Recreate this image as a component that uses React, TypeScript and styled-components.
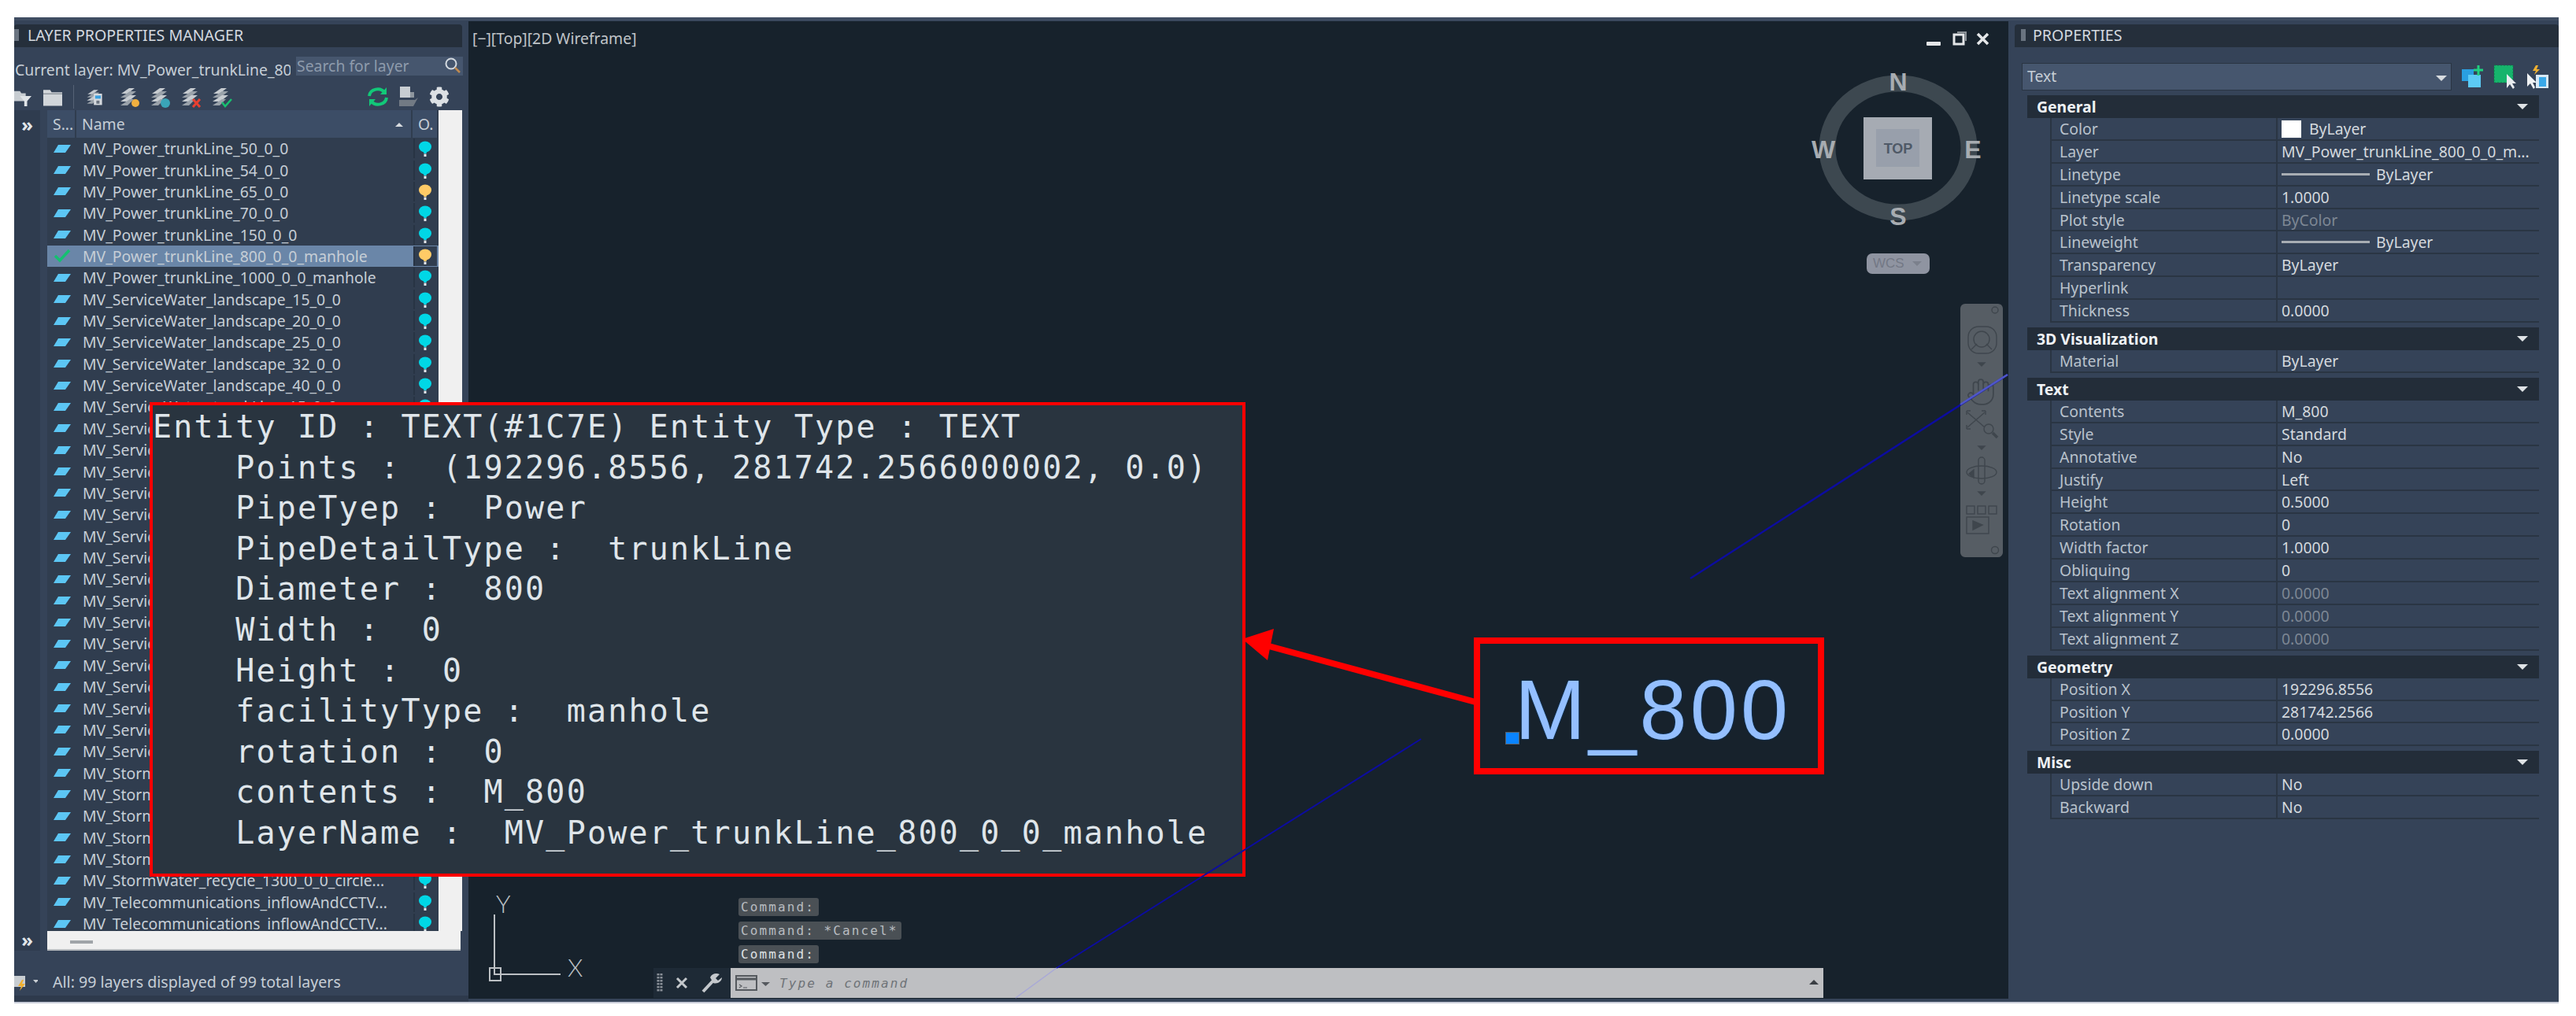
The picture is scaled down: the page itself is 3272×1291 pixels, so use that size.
import React from 'react';
import styled, { createGlobalStyle } from 'styled-components';
import { FaCog } from 'react-icons/fa';
import { Hand } from 'lucide-react';

const GlobalStyle = createGlobalStyle`
  html, body {
    margin: 0;
    background: #fff;
  }
  body {
    font-family: "Noto Sans", "Open Sans", sans-serif;
    overflow: hidden;
  }
`;

type Layer = { name: string; on?: boolean; current?: boolean };

const layers: Layer[] = [
  { name: 'MV_Power_trunkLine_50_0_0' },
  { name: 'MV_Power_trunkLine_54_0_0' },
  { name: 'MV_Power_trunkLine_65_0_0', on: true },
  { name: 'MV_Power_trunkLine_70_0_0' },
  { name: 'MV_Power_trunkLine_150_0_0' },
  { name: 'MV_Power_trunkLine_800_0_0_manhole', on: true, current: true },
  { name: 'MV_Power_trunkLine_1000_0_0_manhole' },
  { name: 'MV_ServiceWater_landscape_15_0_0' },
  { name: 'MV_ServiceWater_landscape_20_0_0' },
  { name: 'MV_ServiceWater_landscape_25_0_0' },
  { name: 'MV_ServiceWater_landscape_32_0_0' },
  { name: 'MV_ServiceWater_landscape_40_0_0' },
  ...[15, 20, 25, 32, 40, 50, 65, 80, 100, 125, 150, 200, 250, 300, 350, 400, 500].map((d) => ({
    name: `MV_ServiceWater_trunkLine_${d}_0_0`,
  })),
  ...[300, 400, 500, 600, 800].map((d) => ({ name: `MV_StormWater_recycle_${d}_0_0` })),
  { name: 'MV_StormWater_recycle_1300_0_0_circle...' },
  { name: 'MV_Telecommunications_inflowAndCCTV...' },
  { name: 'MV_Telecommunications_inflowAndCCTV...' },
];

type Prop = { label: string; value?: string; muted?: boolean; swatch?: boolean; line?: boolean };
type Section = { title: string; rows: Prop[] };

const sections: Section[] = [
  {
    title: 'General',
    rows: [
      { label: 'Color', value: 'ByLayer', swatch: true },
      { label: 'Layer', value: 'MV_Power_trunkLine_800_0_0_m...' },
      { label: 'Linetype', value: 'ByLayer', line: true },
      { label: 'Linetype scale', value: '1.0000' },
      { label: 'Plot style', value: 'ByColor', muted: true },
      { label: 'Lineweight', value: 'ByLayer', line: true },
      { label: 'Transparency', value: 'ByLayer' },
      { label: 'Hyperlink' },
      { label: 'Thickness', value: '0.0000' },
    ],
  },
  { title: '3D Visualization', rows: [{ label: 'Material', value: 'ByLayer' }] },
  {
    title: 'Text',
    rows: [
      { label: 'Contents', value: 'M_800' },
      { label: 'Style', value: 'Standard' },
      { label: 'Annotative', value: 'No' },
      { label: 'Justify', value: 'Left' },
      { label: 'Height', value: '0.5000' },
      { label: 'Rotation', value: '0' },
      { label: 'Width factor', value: '1.0000' },
      { label: 'Obliquing', value: '0' },
      { label: 'Text alignment X', value: '0.0000', muted: true },
      { label: 'Text alignment Y', value: '0.0000', muted: true },
      { label: 'Text alignment Z', value: '0.0000', muted: true },
    ],
  },
  {
    title: 'Geometry',
    rows: [
      { label: 'Position X', value: '192296.8556' },
      { label: 'Position Y', value: '281742.2566' },
      { label: 'Position Z', value: '0.0000' },
    ],
  },
  {
    title: 'Misc',
    rows: [
      { label: 'Upside down', value: 'No' },
      { label: 'Backward', value: 'No' },
    ],
  },
];

const entityLines = [
  'Entity ID : TEXT(#1C7E) Entity Type : TEXT',
  '    Points :  (192296.8556, 281742.2566000002, 0.0)',
  '    PipeTyep :  Power',
  '    PipeDetailType :  trunkLine',
  '    Diameter :  800',
  '    Width :  0',
  '    Height :  0',
  '    facilityType :  manhole',
  '    rotation :  0',
  '    contents :  M_800',
  '    LayerName :  MV_Power_trunkLine_800_0_0_manhole',
];

function LayerStack({ badge }: { badge: 'doc' | 'sun' | 'snow' | 'cross' | 'check' }) {
  return (
    <svg width="30" height="30" viewBox="0 0 30 30">
      <g fill="#c6cbd0">
        <path d="M4 11 L14 4 H21 L12 11 Z" />
        <path d="M3 16 L15 8 H23 L13 16 Z" fill="#9aa2aa" />
        <path d="M3 21 L15 13 H23 L13 21 Z" />
        <path d="M3 26 L15 18 H20 L12 26 Z" fill="#9aa2aa" />
      </g>
      {badge === 'doc' && (
        <g>
          <rect x="14" y="10" width="13" height="18" fill="#d6dade" />
          <rect x="16" y="13" width="9" height="5" fill="#3aa0e0" />
          <rect x="18" y="21" width="5" height="5" fill="#6b7480" />
        </g>
      )}
      {badge === 'sun' && <circle cx="22" cy="23" r="5" fill="#f0b040" />}
      {badge === 'snow' && <circle cx="21" cy="23" r="6" fill="#3aa5b8" />}
      {badge === 'cross' && <path d="M17 18 L26 28 M26 18 L17 28" stroke="#e84030" strokeWidth="3" />}
      {badge === 'check' && <path d="M15 22 L19 27 L27 18" stroke="#18c070" strokeWidth="2.5" fill="none" />}
    </svg>
  );
}

function Bulb({ on }: { on?: boolean }) {
  return (
    <svg width="18" height="22" viewBox="0 0 18 22">
      <ellipse cx="9" cy="7.5" rx="8" ry="7" fill={on ? '#ffcb66' : '#00d7e6'} />
      <path d="M6.5 13 H11.5 L10.5 16 H7.5 Z" fill={on ? '#ffcb66' : '#00d7e6'} />
      <rect x="7.5" y="16.5" width="3" height="3.5" fill="#e4e8ec" />
    </svg>
  );
}

function Plane() {
  return (
    <svg width="24" height="12" viewBox="0 0 24 12">
      <path d="M7 1 H23 L16 11 H1 Z" fill="#5cc6f4" />
    </svg>
  );
}

function Check() {
  return (
    <svg width="24" height="18" viewBox="0 0 24 18">
      <path d="M3 9 L9 15 L21 2" stroke="#14c070" strokeWidth="3.5" fill="none" />
    </svg>
  );
}

function NavWheel() {
  return (
    <svg width="54" height="322" viewBox="0 0 54 322" fill="none" stroke="#3f464d" strokeWidth="1.4">
      <circle cx="44" cy="8" r="4" />
      <rect x="10" y="29" width="36" height="34" rx="13" />
      <circle cx="27" cy="45" r="10" />
      <path d="M14 58 L21 51 M40 58 L33 51" />
      <path d="M23 75 H31 L27 79 Z" fill="#3f464d" />
      <Hand x={7} y={93} width={38} height={38} color="#3f464d" strokeWidth={1.1} />
      <path d="M9 138 L31 157 M31 138 L9 157" />
      <path d="M8 136 h5 M8 136 v5 M32 136 h-5 M32 136 v5 M8 159 h5 M8 159 v-5" />
      <circle cx="36" cy="159" r="6" />
      <path d="M41 164 L47 170" strokeWidth="3.5" />
      <path d="M23 181 H31 L27 185 Z" fill="#3f464d" />
      <rect x="23" y="195" width="8" height="34" rx="4" />
      <ellipse cx="27" cy="214" rx="19" ry="8" />
      <path d="M17 211 L11 216 L17 221 Z" fill="#3f464d" />
      <path d="M23 239 H31 L27 243 Z" fill="#3f464d" />
      <rect x="8" y="257" width="10" height="10" />
      <rect x="22" y="257" width="10" height="10" />
      <rect x="36" y="257" width="10" height="10" />
      <rect x="8" y="271" width="28" height="21" />
      <path d="M16 276 L28 281 L16 287 Z" fill="#3f464d" />
      <circle cx="44" cy="313" r="4.5" />
    </svg>
  );
}

function ViewCube() {
  return (
    <svg width="210" height="200" viewBox="0 0 210 200" overflow="visible">
      <ellipse cx="105" cy="100" rx="90" ry="82" fill="none" stroke="#3d4850" strokeWidth="21" />
      <rect x="61" y="61" width="87" height="79" fill="#a6abb3" />
      <rect x="77" y="76" width="55" height="48" fill="#989fab" />
      <g fontFamily='"Liberation Sans", sans-serif' fontWeight="700" textAnchor="middle" fill="#a7acb1">
        <text x="105" y="107" fontSize="18" fill="#4f5967">TOP</text>
        <text x="105" y="27" fontSize="32">N</text>
        <text x="105" y="198" fontSize="32">S</text>
        <text x="10" y="113" fontSize="32">W</text>
        <text x="200" y="113" fontSize="32">E</text>
      </g>
    </svg>
  );
}

export default function App() {
  return (
    <>
      <GlobalStyle />
      <Frame>
        <LayerPanel>
          <TitleBar $inset="left">
            <Grip />
            <TitleText>LAYER PROPERTIES MANAGER</TitleText>
          </TitleBar>
          <CurrentRow>
            <CurrentText>Current layer: MV_Power_trunkLine_80</CurrentText>
            <SearchBox>
              Search for layer
              <svg width="24" height="24" viewBox="0 0 24 24" fill="none">
                <circle cx="10" cy="10" r="6.5" stroke="#d4dae0" strokeWidth="2" />
                <path d="M15 15 L21 21" stroke="#c08a50" strokeWidth="2.5" />
              </svg>
            </SearchBox>
          </CurrentRow>
          <Toolbar>
            <ToolSlot $w={22}>
              <svg width="24" height="30" viewBox="0 0 24 30">
                <path d="M0 7 H8 L10 10 H16 V21 H0 Z" fill="#c8cdd2" />
                <path d="M8 14 H24 L18 21 V28 H14 V21 Z" fill="#e0e4e8" />
              </svg>
            </ToolSlot>
            <ToolSlot $w={24} $ml={15}>
              <svg width="25" height="24" viewBox="0 0 25 24">
                <path d="M0 3 H9 L11 6 H25 V24 H0 Z" fill="#d2d6da" />
                <path d="M0 8 H25" stroke="#6e7680" strokeWidth="1" />
              </svg>
            </ToolSlot>
            <ToolSep />
            <ToolSlot $w={24}>
              <LayerStack badge="doc" />
            </ToolSlot>
            <ToolSlot $w={39} $ml={13.5}>
              <LayerStack badge="sun" />
            </ToolSlot>
            <ToolSlot $w={39}>
              <LayerStack badge="snow" />
            </ToolSlot>
            <ToolSlot $w={39}>
              <LayerStack badge="cross" />
            </ToolSlot>
            <ToolSlot $w={39}>
              <LayerStack badge="check" />
            </ToolSlot>
            <ToolSpacer />
            <ToolSlot $w={39}>
              <svg width="30" height="30" viewBox="0 0 30 30" fill="none" stroke="#12c878" strokeWidth="4">
                <path d="M4 14 C5 5 18 2 24 10" />
                <path d="M26 16 C25 25 12 28 6 20" />
                <path d="M26 3 V12 H18 Z M4 27 V18 H12 Z" fill="#12c878" strokeWidth="0" />
              </svg>
            </ToolSlot>
            <ToolSlot $w={39}>
              <svg width="28" height="28" viewBox="0 0 28 28">
                <rect x="3" y="1" width="13" height="14" fill="#c8cdd2" />
                <path d="M16 8 H21 V15 H16 Z" fill="#8e969e" />
                <path d="M2 18 H22 L26 15 L20 26 H2 Z" fill="#727a84" />
              </svg>
            </ToolSlot>
            <ToolSlot $w={39}>
              <FaCog size={26} color="#dce0e4" />
            </ToolSlot>
          </Toolbar>
          <TableArea>
            <SideRail>
              <RailChevrons>&raquo;</RailChevrons>
              <RailChevrons>&raquo;</RailChevrons>
            </SideRail>
            <TableColumn>
              <TableRow>
                <Table>
                  <HeaderRow>
                    <HeaderCell $w={37}>S...</HeaderCell>
                    <HeaderCell $w={427}>
                      Name
                      <SortCaret />
                    </HeaderCell>
                    <HeaderCell $w={33}>O.</HeaderCell>
                  </HeaderRow>
                  <LayerList>
                    {layers.map((layer, i) => (
                      <LayerRow key={i} $current={layer.current}>
                        <StatusCell>{layer.current ? <Check /> : <Plane />}</StatusCell>
                        <NameCell>{layer.name}</NameCell>
                        <BulbCell>
                          <Bulb on={layer.on} />
                        </BulbCell>
                      </LayerRow>
                    ))}
                  </LayerList>
                </Table>
                <VScroll />
              </TableRow>
              <HScroll>
                <HThumb />
              </HScroll>
            </TableColumn>
          </TableArea>
          <StatusBar>
            <svg width="30" height="24" viewBox="0 0 30 24">
              <path d="M0 4 H14 V18 H0 Z" fill="#c8cdd2" />
              <path d="M10 9 L5 17 H9 L7 23 L14 14 H10 L12 9 Z" fill="#f0b030" />
              <path d="M24 9 H31 L27.5 13 Z" fill="#c8cdd2" />
            </svg>
            <StatusText>All: 99 layers displayed of 99 total layers</StatusText>
          </StatusBar>
        </LayerPanel>

        <Viewport>
          <ViewLabel>[−][Top][2D Wireframe]</ViewLabel>
          <WindowControls>
            <svg width="90" height="24" viewBox="0 0 90 24">
              <rect x="3" y="15" width="18" height="5" rx="1" fill="#e4e6e8" />
              <rect x="38" y="6" width="12" height="12" fill="none" stroke="#e4e6e8" strokeWidth="3" />
              <path d="M42 3 H53 V14" fill="none" stroke="#8c9298" strokeWidth="2" />
              <path d="M68 5 L81 18 M81 5 L68 18" stroke="#e4e6e8" strokeWidth="3.5" />
            </svg>
          </WindowControls>
          <CubeSlot>
            <ViewCube />
          </CubeSlot>
          <WcsPill>
            WCS
            <svg width="14" height="8" viewBox="0 0 14 8">
              <path d="M1 1 H13 L7 7 Z" fill="#7b808c" />
            </svg>
          </WcsPill>
          <NavBar>
            <NavWheel />
          </NavBar>
          <UcsIcon>
            <svg width="100" height="100" viewBox="0 0 100 100" fill="none">
              <path d="M8 0 V76 H92" stroke="#bcc0c4" strokeWidth="2" />
              <rect x="2" y="68" width="14" height="16" stroke="#bcc0c4" strokeWidth="2" />
            </svg>
            <UcsLetter $axis="y">Y</UcsLetter>
            <UcsLetter $axis="x">X</UcsLetter>
          </UcsIcon>
          <CommandHistory>
            <CommandLine>Command:</CommandLine>
            <CommandLine>Command: *Cancel*</CommandLine>
            <CommandLine $active>Command:</CommandLine>
          </CommandHistory>
          <CommandDock>
            <CommandTools>
              <svg width="98" height="38" viewBox="0 0 98 38" fill="none">
                <path d="M6 7 V31 M10 7 V31" stroke="#8a9098" strokeWidth="3" strokeDasharray="2.5 1.5" />
                <path d="M30 13 L42 25 M42 13 L30 25" stroke="#c4c8cc" strokeWidth="3" />
                <path d="M63 30 L76 16" stroke="#c4c8cc" strokeWidth="4" />
                <path d="M72 12 C74 7 80 6 84 8 L79 13 L82 16 L87 12 C87 17 81 21 76 19 Z" fill="#c4c8cc" />
              </svg>
            </CommandTools>
            <CommandInput>
              <svg width="46" height="22" viewBox="0 0 46 22" fill="none">
                <rect x="1" y="2" width="26" height="18" stroke="#55595e" strokeWidth="2" />
                <path d="M1 6 H27" stroke="#55595e" strokeWidth="3" />
                <path d="M5 13 L8 15 L5 17 M10 17 H15" stroke="#55595e" strokeWidth="1.2" />
                <path d="M33 10 H44 L38.5 15 Z" fill="#55595e" />
              </svg>
              <CommandPrompt>Type a command</CommandPrompt>
              <CommandCaret />
            </CommandInput>
          </CommandDock>
        </Viewport>

        <PropertiesPanel>
          <TitleBar $inset="right">
            <Grip />
            <TitleText>PROPERTIES</TitleText>
          </TitleBar>
          <SelectRow>
            <SelectBox>
              Text
              <SelectCaret />
            </SelectBox>
            <SelectIcons>
              <svg width="30" height="30" viewBox="0 0 30 30">
                <rect x="1" y="6" width="15" height="15" fill="#2a9fe0" />
                <rect x="9" y="13" width="16" height="16" fill="#5ccbf5" />
                <path d="M22 1 V14 M16 7 H28" stroke="#20d080" strokeWidth="3" />
              </svg>
              <svg width="30" height="32" viewBox="0 0 30 32">
                <rect x="1" y="1" width="24" height="22" fill="#16b46c" stroke="#0c7a48" strokeDasharray="2 2" />
                <path d="M17 12 V30 L21 25 L25 31 L27 29 L24 24 H29 Z" fill="#e8ecf0" />
              </svg>
              <svg width="30" height="32" viewBox="0 0 30 32">
                <path d="M13 1 L9 8 H13 L11 13 L18 6 H14 L16 1 Z" fill="#f0b030" />
                <rect x="13" y="13" width="16" height="17" fill="#d8e8f4" />
                <rect x="17" y="16" width="9" height="12" fill="#3aa8e8" />
                <path d="M2 11 V28 L6 24 L10 31 L12 29 L9 23 H14 Z" fill="#f0f2f4" />
              </svg>
            </SelectIcons>
          </SelectRow>
          {sections.map((section) => (
            <PropSection key={section.title}>
              <SectionHead>
                {section.title}
                <SectionCaret />
              </SectionHead>
              {section.rows.map((row) => (
                <PropRow key={row.label}>
                  <PropLabel>{row.label}</PropLabel>
                  <PropValue $muted={row.muted}>
                    {row.swatch && <Swatch />}
                    {row.line && <LineSample />}
                    {row.value}
                  </PropValue>
                </PropRow>
              ))}
            </PropSection>
          ))}
        </PropertiesPanel>

        <EntityPopup>
          {entityLines.map((line) => (
            <EntityLine key={line}>{line}</EntityLine>
          ))}
        </EntityPopup>

        <Annotations viewBox="0 0 3232 1253" width="3232" height="1253">
          <path d="M2129 713 L2532 454" stroke="#0c0ca0" strokeWidth="2.5" />
          <path d="M2472 492 L2532 454" stroke="#5058c8" strokeWidth="2.5" />
          <path d="M1787 917 L1324 1208" stroke="#0c0ca0" strokeWidth="2" />
          <path d="M1324 1208 L1272 1246" stroke="#a8a8d8" strokeWidth="1.5" />
          <path d="M1856 870 L1590 798" stroke="#ff0000" strokeWidth="8" />
          <path d="M1560 790 L1600 777 L1592 817 Z" fill="#ff0000" />
        </Annotations>

        <CalloutBox>
          <GripSquare />
          <CalloutText>M_800</CalloutText>
        </CalloutBox>
      </Frame>
    </>
  );
}

const Frame = styled.div`
  position: relative;
  box-sizing: border-box;
  margin: 22px 0 0 18px;
  width: 3232px;
  height: 1253px;
  display: grid;
  grid-template-columns: 577px 1956px 699px;
  background: #354358;
  border-top: 4px solid #3f4d62;
  border-bottom: 2px solid #c8ccd8;
  color: #c6ced6;
  font-size: 19.4px;
`;

const LayerPanel = styled.div`
  display: flex;
  flex-direction: column;
  min-width: 0;
  overflow: hidden;
`;

const TitleBar = styled.div<{ $inset: 'left' | 'right' }>`
  display: flex;
  align-items: center;
  gap: ${(p) => (p.$inset === 'left' ? '11px' : '9px')};
  box-sizing: border-box;
  height: 29px;
  margin: 5px ${(p) => (p.$inset === 'left' ? '8px' : '0')} 0 ${(p) => (p.$inset === 'left' ? '0' : '8px')};
  padding: 0 0 3px ${(p) => (p.$inset === 'left' ? '0' : '8px')};
  background: #252f3b;
  border-radius: 4px 4px 0 0;
`;

const Grip = styled.span`
  width: 6px;
  height: 15px;
  background: #6a7480;
`;

const TitleText = styled.span`
  color: #d4dae0;
  font-size: 19.6px;
`;

const CurrentRow = styled.div`
  display: flex;
  align-items: flex-end;
  height: 24px;
  margin-top: 12px;
  padding-right: 7px;
`;

const CurrentText = styled.div`
  width: 350px;
  overflow: hidden;
  white-space: nowrap;
  line-height: 22px;
  margin-bottom: -4px;
  padding-left: 1px;
`;

const SearchBox = styled.div`
  display: flex;
  align-items: center;
  justify-content: space-between;
  margin-left: auto;
  box-sizing: border-box;
  width: 212px;
  height: 24px;
  padding: 0 1px 2px 1px;
  background: #46566e;
  color: #8e9bac;
`;

const Toolbar = styled.div`
  display: flex;
  align-items: flex-start;
  height: 44px;
  padding: 10px 18px 0 0;
  box-sizing: border-box;
`;

const ToolSlot = styled.div<{ $w: number; $ml?: number }>`
  display: flex;
  justify-content: center;
  align-items: center;
  flex: none;
  width: ${(p) => p.$w}px;
  height: 34px;
  margin-left: ${(p) => p.$ml ?? 0}px;
`;

const ToolSep = styled.span`
  width: 1px;
  height: 30px;
  margin: 2px 14px 0 14px;
  background: #556276;
`;

const ToolSpacer = styled.span`
  flex: 1;
`;

const TableArea = styled.div`
  display: flex;
  height: 1068px;
`;

const SideRail = styled.div`
  display: flex;
  flex-direction: column;
  justify-content: space-between;
  box-sizing: border-box;
  width: 33px;
  margin-right: 9px;
  padding: 4px 0 0;
  background: #2f3c4f;
`;

const RailChevrons = styled.span`
  text-align: center;
  color: #e2e6ea;
  font-size: 24px;
  font-weight: 700;
  line-height: 28px;
`;

const TableColumn = styled.div`
  display: flex;
  flex-direction: column;
  width: 527px;
`;

const TableRow = styled.div`
  display: flex;
  height: 1043px;
`;

const Table = styled.div`
  width: 497px;
  background: #303d4f;
  display: flex;
  flex-direction: column;
`;

const HeaderRow = styled.div`
  display: flex;
  flex: none;
  height: 35px;
  background: #3c4d66;
`;

const HeaderCell = styled.div<{ $w: number }>`
  position: relative;
  display: flex;
  align-items: center;
  box-sizing: border-box;
  width: ${(p) => p.$w}px;
  padding-left: 7px;
  border-right: 2px solid #303d4f;
  color: #c6ced6;
  overflow: hidden;
  white-space: nowrap;
`;

const SortCaret = styled.span`
  position: absolute;
  right: 10px;
  top: 16px;
  border-left: 5px solid transparent;
  border-right: 5px solid transparent;
  border-bottom: 5px solid #d8dce0;
`;

const LayerList = styled.div`
  flex: 1;
  overflow: hidden;
`;

const LayerRow = styled.div<{ $current?: boolean }>`
  display: flex;
  align-items: center;
  height: 27.37px;
  background: ${(p) => (p.$current ? '#6a86a8' : 'transparent')};
`;

const StatusCell = styled.div`
  display: flex;
  justify-content: center;
  width: 37px;
  flex: none;
`;

const NameCell = styled.div`
  flex: none;
  width: 428px;
  padding-left: 8px;
  box-sizing: border-box;
  white-space: nowrap;
  overflow: hidden;
  color: #c6ced6;
`;

const BulbCell = styled.div`
  display: flex;
  justify-content: center;
  flex: none;
  width: 30px;
  padding-top: 3px;
  background: #303d4f;
  box-shadow: inset 2px 0 0 #283444;
`;

const VScroll = styled.div`
  width: 30px;
  background: #f0f0f0;
`;

const HScroll = styled.div`
  display: flex;
  align-items: center;
  width: 525px;
  height: 25px;
  background: #f0f0f0;
  border-bottom: 2px solid #b8bcc0;
  box-sizing: border-box;
`;

const HThumb = styled.span`
  width: 29px;
  height: 4px;
  margin: 4px 0 0 29px;
  background: #a0a4a8;
`;

const StatusBar = styled.div`
  display: flex;
  align-items: center;
  gap: 19px;
  height: 57px;
  padding-top: 22px;
  box-sizing: border-box;
  border-bottom: 8px solid #2e3a4c;
  flex: 1;
`;

const StatusText = styled.span`
  color: #c6ced6;
  font-size: 19.6px;
`;

const Viewport = styled.div`
  position: relative;
  margin: 1px 0 4px;
  background: #17222c;
`;

const ViewLabel = styled.div`
  position: absolute;
  left: 5px;
  top: 12px;
  color: #c0c4c8;
  font-size: 19.4px;
  line-height: 20px;
`;

const WindowControls = styled.div`
  position: absolute;
  left: 1849px;
  top: 11px;
`;

const CubeSlot = styled.div`
  position: absolute;
  left: 1711px;
  top: 61px;
`;

const WcsPill = styled.div`
  position: absolute;
  left: 1776px;
  top: 295px;
  display: flex;
  align-items: center;
  gap: 9px;
  box-sizing: border-box;
  width: 80px;
  height: 26px;
  padding-left: 8px;
  background: #8f94a1;
  border-radius: 7px;
  color: #737885;
  font: 17px "Liberation Sans", sans-serif;
`;

const NavBar = styled.div`
  position: absolute;
  left: 1895px;
  top: 359px;
  width: 54px;
  height: 322px;
  background: #565d64;
  border-radius: 6px;
`;

const UcsIcon = styled.div`
  position: absolute;
  left: 25px;
  top: 1135px;
  width: 100px;
  height: 100px;
`;

const UcsLetter = styled.span<{ $axis: 'x' | 'y' }>`
  position: absolute;
  left: ${(p) => (p.$axis === 'y' ? '10px' : '101px')};
  top: ${(p) => (p.$axis === 'y' ? '-31px' : '50px')};
  color: #bcc0c4;
  font: 300 31px/34px Lato, "Liberation Sans", sans-serif;
`;

const CommandHistory = styled.div`
  position: absolute;
  left: 343px;
  top: 1114px;
  display: flex;
  flex-direction: column;
  align-items: flex-start;
  gap: 7.5px;
`;

const CommandLine = styled.span<{ $active?: boolean }>`
  height: 22.5px;
  padding: 0 5px 0 3px;
  background: #4a5055;
  border-radius: 3px;
  color: ${(p) => (p.$active ? '#dfe2e4' : '#b8bcc0')};
  font: 16px/23px "DejaVu Sans Mono", monospace;
  letter-spacing: 2.1px;
  white-space: pre;
`;

const CommandDock = styled.div`
  position: absolute;
  left: 235px;
  top: 1203px;
  display: flex;
  height: 38px;
`;

const CommandTools = styled.div`
  width: 98px;
  height: 38px;
  background: #1e2a36;
`;

const CommandInput = styled.div`
  position: relative;
  display: flex;
  align-items: center;
  box-sizing: border-box;
  width: 1388px;
  padding-left: 6px;
  gap: 10px;
  background: #bebfc2;
`;

const CommandPrompt = styled.span`
  color: #6f7378;
  font: italic 16px "DejaVu Sans Mono", monospace;
  letter-spacing: 2.1px;
`;

const CommandCaret = styled.span`
  position: absolute;
  right: 6px;
  top: 15px;
  border-left: 6px solid transparent;
  border-right: 6px solid transparent;
  border-bottom: 6px solid #3a3e44;
`;

const PropertiesPanel = styled.div`
  display: flex;
  flex-direction: column;
  min-width: 0;
`;

const SelectRow = styled.div`
  display: flex;
  align-items: center;
  height: 35px;
  margin: 20px 0 0 17px;
`;

const SelectBox = styled.div`
  position: relative;
  display: flex;
  align-items: center;
  box-sizing: border-box;
  width: 546px;
  height: 35px;
  padding: 0 0 3px 6px;
  background: #46566e;
  border: 1px solid #2a3543;
  color: #c6ced6;
`;

const SelectCaret = styled.span`
  position: absolute;
  right: 5px;
  top: 15px;
  border-left: 7px solid transparent;
  border-right: 7px solid transparent;
  border-top: 7px solid #d8dce0;
`;

const SelectIcons = styled.div`
  display: flex;
  gap: 11px;
  margin-left: 12px;
`;

const PropSection = styled.section`
  margin: 6px 0 0 24px;
  width: 650px;
`;

const SectionHead = styled.div`
  position: relative;
  display: flex;
  align-items: center;
  height: 29px;
  padding-left: 12px;
  background: #232d39;
  color: #eef1f4;
  font-weight: 700;
`;

const SectionCaret = styled.span`
  position: absolute;
  right: 14px;
  top: 11px;
  border-left: 7px solid transparent;
  border-right: 7px solid transparent;
  border-top: 7px solid #dfe3e6;
`;

const PropRow = styled.div`
  display: grid;
  grid-template-columns: 287px 1fr;
  box-sizing: border-box;
  height: 28.9px;
  margin-left: 29px;
  border: solid #2a3543;
  border-width: 0 0 2px 2px;
`;

const PropLabel = styled.div`
  display: flex;
  align-items: center;
  padding-left: 10px;
  border-right: 2px solid #2a3543;
  color: #b9c2cc;
`;

const PropValue = styled.div<{ $muted?: boolean }>`
  display: flex;
  align-items: center;
  gap: 8px;
  padding-left: 5px;
  color: ${(p) => (p.$muted ? '#7d8794' : '#d4d9de')};
  white-space: nowrap;
  overflow: hidden;
`;

const Swatch = styled.span`
  width: 25px;
  height: 22px;
  background: #fff;
  margin-right: 2px;
`;

const LineSample = styled.span`
  width: 112px;
  height: 3px;
  background: #a8adb3;
`;

const Annotations = styled.svg`
  position: absolute;
  left: 0;
  top: -4px;
  pointer-events: none;
`;

const EntityPopup = styled.div`
  position: absolute;
  left: 172px;
  top: 485px;
  box-sizing: border-box;
  width: 1392px;
  height: 603px;
  padding-top: 2px;
  background: #29343f;
  border: 4px solid #ff0000;
`;

const EntityLine = styled.div`
  height: 51.6px;
  color: #dfe5ea;
  font: 40px/51.6px "DejaVu Sans Mono", monospace;
  letter-spacing: 2.2px;
  white-space: pre;
`;

const CalloutBox = styled.div`
  position: absolute;
  left: 1854px;
  top: 784px;
  box-sizing: border-box;
  width: 445px;
  height: 174px;
  background: #17222c;
  border: 8px solid #ff0000;
`;

const GripSquare = styled.span`
  position: absolute;
  left: 32px;
  top: 112px;
  width: 18px;
  height: 16px;
  background: #0a84ff;
  border: 1px solid #5a6068;
  box-sizing: border-box;
`;

const CalloutText = styled.div`
  position: absolute;
  left: 44px;
  top: 22px;
  color: #94bfff;
  font: 108px/124px "Liberation Sans", sans-serif;
  letter-spacing: 4.2px;
  text-shadow: 0 0 2px #0a4a90;
`;
